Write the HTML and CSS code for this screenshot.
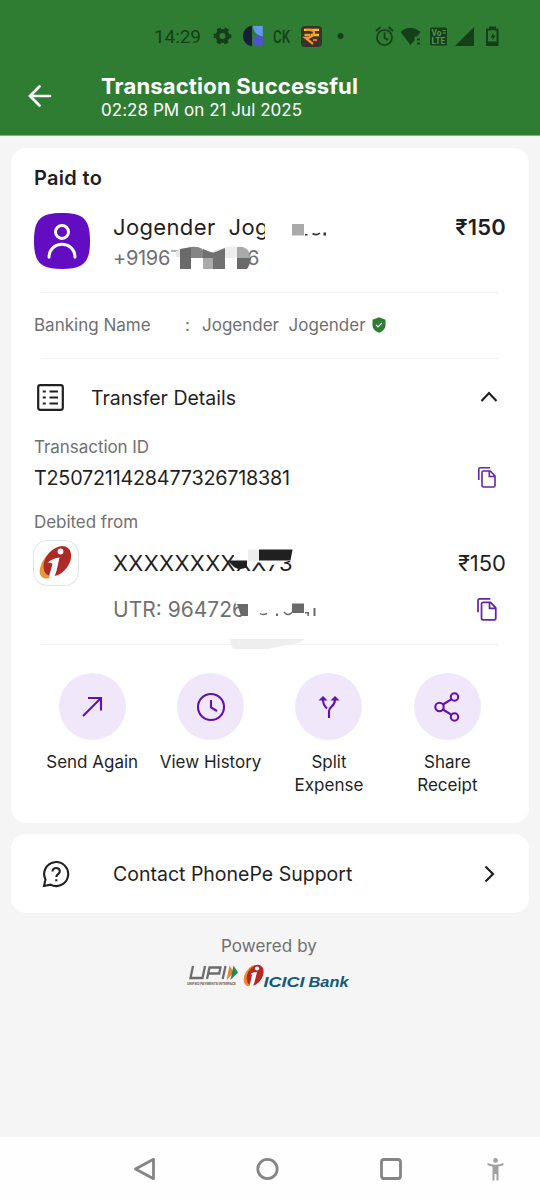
FILE: index.html
```html
<!DOCTYPE html>
<html lang="en">
<head>
<meta charset="utf-8">
<title>Transaction Successful</title>
<link rel="stylesheet" href="styles.css">
</head>
<body>
<div class="screen">
  <header class="header">
    <div class="status">
      <span class="clock">14:29</span>
      <svg class="status-icons" width="350" height="30" viewBox="210 21 350 30">
        <g fill="none" stroke="#153f19">
          <circle cx="222.500" cy="36" r="5" stroke-width="4"/>
          <circle cx="222.500" cy="36" r="7.500" stroke-width="2.600" stroke-dasharray="4.300 3.554" stroke-dashoffset="2.150"/>
        </g>
        <path d="M252 25.500A10.600 10.600 0 0 0 252 46.500z" fill="#17203a"/>
        <path d="M253 26h9.800v10.500C257 36 253 31 253 26z" fill="#6597ef"/>
        <circle cx="258" cy="41" r="5.200" fill="#4e54cf"/><path d="M258 36.500h4.800V46H258z" fill="#4e54cf"/>
        <text class="ck" x="273" y="42.800" textLength="17" lengthAdjust="spacingAndGlyphs">CK</text>
        <rect x="301" y="26" width="21" height="21" rx="4" fill="#38332b"/>
        <path d="M304 29.800h15M311 35h8" stroke="#ffc22a" stroke-width="2.300"/>
        <path d="M304.500 35h6M306 29.800h3q5 0 5 3t-5 5h-3.500l7.500 6" fill="none" stroke="#f7962c" stroke-width="2.300"/>
        <path d="M313 40h4" stroke="#f16c2c" stroke-width="2.200"/>
        <circle cx="340.500" cy="36" r="3" fill="#153f19"/>
        <g fill="none" stroke="#153f19" stroke-width="1.700">
          <circle cx="384.500" cy="37.500" r="7.500"/><path d="M384.500 32.500v5.500l3.500 2M376 31l4.500-4M393 31l-4.500-4"/>
        </g>
        <path d="M400.500 32Q410.500 23.500 420.500 32L417 36.500h-2.500v4L410.500 45z" fill="#153f19"/>
        <path d="M417 38.500h3v2h-3zM417 42.500h3v2h-3z" fill="#153f19"/>
        <rect x="430" y="27.500" width="17" height="18" rx="1.500" fill="#153f19"/>
        <text class="volte" x="431.500" y="35.500" textLength="10" lengthAdjust="spacingAndGlyphs">Vo</text><path d="M442.500 30.500h3.500M442.500 33h3.500" stroke="#4c9750"/>
        <text class="volte" x="431.500" y="44.300" textLength="14" lengthAdjust="spacingAndGlyphs">LTE</text>
        <path d="M455 46L474 27V46z" fill="#153f19"/>
        <path d="M490 27.500h5v2h2.500v15.500h-10.500v-15.500h3z" fill="none" stroke="#153f19" stroke-width="2"/>
        <path d="M487 41.500h11v4h-11zM490 27.500h5v2.500h-5zM493.500 32.500l-3 5h2v3l3-5h-2z" fill="#153f19"/>
      </svg>
    </div>
    <div class="titlebar">
      <svg class="back" width="24" height="24" viewBox="0 0 24 24"><path d="M22 12H2.500M11.500 2.500L2 12l9.500 9.500"/></svg>
      <div>
        <h1 class="title">Transaction Successful</h1>
        <p class="when">02:28 PM on 21 Jul 2025</p>
      </div>
    </div>
  </header>

  <main class="content">
    <section class="card receipt">
      <h2 class="paid">Paid to</h2>
      <div class="payee">
        <svg class="avatar" width="56" height="56" viewBox="0 0 57 57"><path d="M28.500 0C50 0 57 6 57 28.500S50 57 28.500 57 0 51 0 28.500 7 0 28.500 0z"/><circle cx="28.500" cy="19.300" r="6.600"/><path class="line" d="M15.300 45c0-17.500 26.400-17.500 26.400 0"/></svg>
        <div class="who">
          <p class="name">Jogender&nbsp; Jog</p>
          <p class="phone">+9196<span class="phone-end">6</span></p>
          <svg class="mask mask-payee" width="230" height="64" viewBox="105 210 230 64">
            <path d="M265 214h16v27h-16z" fill="#fff"/>
            <path d="M292 224h12v11.500h-12z" fill="#aaa"/>
            <path d="M305 234h2.500v1.500H305zM323.500 232.500h2.500v3h-2.500z" fill="#333"/><path d="M312.500 233.500q4 2.500 7.500-.5" fill="none" stroke="#333" stroke-width="1.500"/>
            <path d="M171 251h6.500l-1 2" fill="none" stroke="#999" stroke-width="1.500"/>
            <path d="M176 251l15-3.500v9.500h-15zM214 250l21-4v12h-21z" fill="#e9e9e9"/>
            <path d="M180 249l11-2v11h12v-5.500h22V269h-12v-11h-10v11h-11v-11h-1v11H180z" fill="#6a6a6a"/>
            <path d="M191 247q8-1 12 3v8h-12z" fill="#858585"/><path d="M191.500 258H203v11h-11.500z" fill="#fff"/>
            <path d="M203 249l10 4 12-5v21h-12v-11h-10z" fill="#707070"/>
            <path d="M203 258h10v11h-10z" fill="#aaa"/><path d="M225 247h12v11h-12z" fill="#eee"/><path d="M225 258h12v11h-12z" fill="#fff"/>
            <path d="M237 247q9-1 12 5l1 6h-13z" fill="#aaa"/><path d="M237 258h14q-1 7-4 11h-10z" fill="#6a6a6a"/>
          </svg>
        </div>
        <p class="amount strong">₹150</p>
      </div>
      <hr class="rule">
      <div class="bank">
        <span class="bank-label">Banking Name</span><span class="colon">:</span><span>Jogender&nbsp; Jogender</span>
        <svg class="shield" width="14" height="16" viewBox="0 0 14 16"><path d="M7 .3L13.500 2.800V8c0 3.800-3 6.600-6.500 7.700C3.500 14.600.5 11.800.5 8V2.800z" fill="#2b7d32"/><path d="M4 7.800l2 2 4-4" fill="none" stroke="#fff" stroke-width="1.200"/></svg>
      </div>
      <hr class="rule">
      <div class="details">
        <svg class="list" width="27" height="27" viewBox="0 0 27 27"><rect x="1.200" y="1.200" width="24.600" height="24.600" rx="2"/><path d="M5.800 7.500h3M12.500 7.500h8.500M5.800 13.500h3M12.500 13.500h8.500M5.800 19.500h3M12.500 19.500h8.500"/></svg>
        <span class="details-title">Transfer Details</span>
        <svg class="chev" width="18" height="18" viewBox="0 0 18 18"><path d="M1.500 13L9 5l7.500 8"/></svg>
      </div>
      <p class="label">Transaction ID</p>
      <div class="txn">
        <span class="txn-id">T2507211428477326718381</span>
        <svg class="copy" width="18" height="21" viewBox="0 0 18 21"><path d="M.8 13V2.300Q.8.800 2.300.800H12M5.300 4h7L17 9v9.500q0 1.500-1.500 1.500h-10Q4 20 4 18.500v-13Q4 4 5.300 4zM11.300 4v5.500H17"/></svg>
      </div>
      <p class="label debited">Debited from</p>
      <div class="account">
        <svg class="bank-logo" width="46" height="46" viewBox="0 0 46 46">
          <rect class="frame" x=".6" y=".6" width="44.800" height="44.800" rx="13"/>
          <g transform="rotate(38 23 22)"><ellipse cx="21.500" cy="24.500" rx="10" ry="18" fill="#eb9736"/><ellipse cx="23.500" cy="20.500" rx="11.500" ry="17" fill="#ae2a27"/></g>
          <circle cx="27.500" cy="11.500" r="2.900" fill="#fff"/><path d="M14.500 22.500q6-4.500 12-5l-3 13.500q-1 5-4.500 8-3.500.5-2.500-4.500l3-10.500q-1-2-5-1.500z" fill="#fff"/>
        </svg>
        <div class="acct-wrap">
          <span class="acct">XXXXXXXXXX73</span>
          <svg class="mask mask-acct" width="80" height="32" viewBox="225 545 80 32">
            <path d="M234 545h48v18.500l-14 2-5-3h-29zM282 545h14v16h-14z" fill="#fff"/>
            <path d="M248 549.500h11V561h-11z" fill="#eee"/><path d="M259 549.500h33.500l-2 11H259z" fill="#202020"/>
            <path d="M227.500 560.500H247v7q-8 3-13-.5z" fill="#202020"/>
          </svg>
        </div>
        <p class="amount">₹150</p>
      </div>
      <div class="utr">
        <div class="acct-wrap">
          <span class="utr-text">UTR: 964726</span>
          <svg class="mask mask-utr" width="100" height="32" viewBox="230 595 100 32">
            <path d="M235.500 597h14v8h-14zM248 597h8v24h-8z" fill="#fff"/><path d="M237 605h11v12h-7z" fill="#6a6a6a"/>
            <path d="M292 604.500h12V614h-12z" fill="#6a6a6a"/>
            <path d="M260 614.500q3 2 7 0M284 613q4 5 8.500 0" fill="none" stroke="#6a6a6a" stroke-width="1.500"/>
            <path d="M276 614.500h2v2.500h-2zM305 613h4v4h-1.500v-2.500H305zM313.500 609h2v8h-2z" fill="#6a6a6a"/>
          </svg>
        </div>
        <svg class="copy" width="20" height="23" viewBox="0 0 18 21"><path d="M.8 13V2.300Q.8.800 2.300.800H12M5.300 4h7L17 9v9.500q0 1.500-1.500 1.500h-10Q4 20 4 18.500v-13Q4 4 5.300 4zM11.300 4v5.500H17"/></svg>
      </div>
      <div class="rule-wrap">
        <hr class="rule">
        <svg class="mask mask-rule" width="76" height="12" viewBox="0 0 76 12"><path d="M0 0h75q-5 5-18 6l-20 4H4q-4-3-4-10z" fill="#eee"/></svg>
      </div>
      <nav class="actions">
        <div class="action"><span class="disc"><svg width="34" height="34" viewBox="0 0 34 34"><path d="M8 26L26 8M13 8h13v12.500"/></svg></span>Send Again</div>
        <div class="action"><span class="disc"><svg width="34" height="34" viewBox="0 0 34 34"><circle cx="17" cy="17" r="13"/><path d="M17 10v7.500l6 3.500"/></svg></span>View History</div>
        <div class="action"><span class="disc"><svg width="34" height="34" viewBox="0 0 34 34"><path d="M11 9.500C11 14 12 16 15 18.500M23 9.500C23 17 17 16 17 21v7"/><path class="solid" d="M9 9.500L11 7.500l2 2zM21 9.500l2-2 2 2z"/></svg></span>Split Expense</div>
        <div class="action"><span class="disc"><svg width="34" height="34" viewBox="0 0 34 34"><circle cx="9.500" cy="17" r="4.200"/><circle cx="24.500" cy="7" r="3.700"/><circle cx="24.500" cy="27" r="3.700"/><path d="M13 14.500l8.200-5.200M13 19.500l8.200 5.200"/></svg></span>Share Receipt</div>
      </nav>
    </section>

    <section class="card support">
      <svg class="help" width="28" height="28" viewBox="0 0 28 28"><path d="M2 26l1.500-6.500A12 12 0 1 1 8.500 24.600z"/><path d="M10.500 11.500c0-5 7.500-4.500 7.300 0 0 2.500-3.500 2.800-3.500 5.500M14.300 19.300v2"/></svg>
      <span class="support-text">Contact PhonePe Support</span>
      <svg class="chev" width="18" height="18" viewBox="0 0 18 18"><path d="M5.500 1.500L13 9l-7.500 7.500"/></svg>
    </section>

    <footer class="powered">
      <p class="powered-text">Powered by</p>
      <svg class="logos" width="164" height="30" viewBox="186 962 164 30">
        <g fill="none" stroke="#6d6d6d" stroke-width="2.300">
          <path d="M193 966l-2.500 12h12L205 966M207 979l2.500-11.500h11l-1.300 6h-11M225.500 966l-2.800 13"/>
        </g>
        <path d="M229.500 965.500l4.500 7-7.500 7.500z" fill="#f08131"/><path d="M233.500 965.500l4.500 7-7.500 7.500z" fill="#218b4b"/>
        <text class="upi-sub" x="187" y="984.500" textLength="49" lengthAdjust="spacingAndGlyphs">UNIFIED PAYMENTS INTERFACE</text>
        <g transform="rotate(30 254 975)"><ellipse cx="252.500" cy="976.500" rx="7" ry="11.500" fill="#f18a2c"/><ellipse cx="255" cy="974.500" rx="7.500" ry="11" fill="#b72824"/></g>
        <circle cx="257" cy="968.500" r="2.100" fill="#fff"/><path d="M250.500 974q3-2 6.500-2l-2.500 10q-1 4-4 4.500-1 0-.5-2.500l2-9q0-1-1.500-1z" fill="#fff"/>
        <text class="icici" x="263.500" y="986.500" textLength="41" lengthAdjust="spacingAndGlyphs">ICICI</text>
        <text class="icici" x="308.500" y="986.500" textLength="40" lengthAdjust="spacingAndGlyphs">Bank</text>
      </svg>
    </footer>
  </main>

  <div class="navbar">
    <svg width="540" height="63" viewBox="0 1137 540 63">
      <g fill="none" stroke="#858585" stroke-width="2.800" stroke-linejoin="round">
        <path d="M135.500 1169L153.500 1159.300V1178.700z"/><circle cx="267.500" cy="1169" r="9.700"/><rect x="381.500" y="1159.500" width="19" height="19" rx="2.500"/>
      </g>
      <circle cx="495.500" cy="1160.500" r="2.400" fill="#a2a2a2"/>
      <path d="M487.500 1163q8 3.300 16 0v2.200l-5 1.300v14h-2v-6.500h-2v6.500h-2v-14l-5-1.300z" fill="#a2a2a2"/>
    </svg>
  </div>
</div>
</body>
</html>
```

FILE: styles.css
```css
* { box-sizing: border-box; margin: 0; padding: 0; }
body { font-family: Inter, "Noto Sans", sans-serif; color: #1f1f1f; background: #f5f5f5; }
svg { display: block; flex: none; }
.screen { width: 540px; height: 1200px; display: flex; flex-direction: column; overflow: hidden; }

.header { height: 136px; background: #2f7d33; border-bottom: 1px solid #83b186; flex: none; }
.status { height: 72px; padding-left: 154px; display: flex; align-items: center; }
.clock { width: 56px; flex: none; font: 19px Roboto, sans-serif; letter-spacing: -0.1px; color: #153f19; }
.ck { font: 500 18.500px Roboto, sans-serif; fill: #153f19; }
.volte { font: bold 9.500px Roboto, sans-serif; fill: #4c9750; }
.titlebar { display: flex; align-items: center; padding-left: 28px; gap: 49px; height: 50px; color: #fff; }
.back { fill: none; stroke: #fff; stroke-width: 2.700; stroke-linecap: round; margin-top: -2px; }
.title { font-size: 22px; line-height: 26px; font-weight: 700; letter-spacing: 0.18px; white-space: nowrap; }
.when { font-size: 17px; line-height: 22px; letter-spacing: 0.04px; white-space: nowrap; }

.content { flex: 1; padding: 12px 11px 0; }
.card { background: #fff; border-radius: 15px; }
.receipt { height: 675px; padding: 0 23px; }
.paid { font-size: 20px; line-height: 60px; font-weight: 600; letter-spacing: 0.3px; }
.payee { height: 84px; display: flex; padding-top: 5px; }
.avatar { fill: #630dc2; }
.avatar circle, .avatar .line { fill: none; stroke: #fff; stroke-width: 3; stroke-linecap: round; }
.who { position: relative; margin-left: 23px; flex: 1; white-space: nowrap; }
.name { font-size: 22px; line-height: 28px; letter-spacing: 0.36px; }
.phone { font-size: 20px; line-height: 34px; letter-spacing: -0.3px; color: #707070; }
.phone-end { margin-left: 77px; }
.amount { margin-left: auto; font-size: 22px; line-height: 28px; }
.strong { font-weight: 600; letter-spacing: 0.2px; }
.mask { position: absolute; }
.mask-payee { left: -8px; top: -3px; }
.rule { border: 0; height: 1px; background: #f1f1f1; margin: 0 7px; }
.bank { height: 65px; padding-bottom: 2px; display: flex; align-items: center; font-size: 17px; color: #707070; }
.bank-label { width: 151px; }
.colon { width: 17px; }
.shield { margin-left: 6px; }
.details { height: 76px; display: flex; align-items: center; padding: 0 8px 0 3px; }
.list { fill: none; stroke: #202020; stroke-width: 2.200; }
.details-title { margin-left: 27px; font-size: 19.500px; padding-top: 1px; }
.chev { margin-left: auto; fill: none; stroke: #202020; stroke-width: 2.200; }
.label { font-size: 17px; line-height: 24px; letter-spacing: -0.05px; color: #707070; }
.txn { height: 37px; display: flex; align-items: center; padding-right: 10px; font-size: 19.800px; letter-spacing: -0.23px; }
.copy { margin-left: auto; fill: none; stroke: #6525a5; stroke-width: 1.600; }
.debited { margin-top: 14px; }
.account { height: 46px; margin-top: 6px; display: flex; align-items: center; }
.bank-logo { margin-left: -1px; }
.frame { fill: #fff; stroke: #dce3ea; }
.acct-wrap { position: relative; margin-left: 34px; font-size: 22px; line-height: 28px; white-space: nowrap; }
.acct { letter-spacing: 0.36px; }
.mask-acct { left: 112px; top: -4px; }
.utr { height: 47px; padding-right: 9px; display: flex; align-items: center; color: #707070; }
.utr .acct-wrap { margin-left: 79px; }
.utr-text { font-size: 21px; }
.mask-utr { left: 117px; top: -1px; }
.rule-wrap { position: relative; padding-top: 11px; }
.mask-rule { left: 196px; top: 6px; }
.actions { display: grid; grid-template-columns: repeat(4, 118.400px); margin: 28px 0 0 -1px; }
.action { display: flex; flex-direction: column; align-items: center; text-align: center; font-size: 17px; line-height: 23px; padding: 0 16px; white-space: nowrap; }
.action:nth-child(n+3) { white-space: normal; }
.disc { width: 67px; height: 67px; margin-bottom: 11px; border-radius: 50%; background: #f1e7fb; display: flex; align-items: center; justify-content: center; }
.disc svg { fill: none; stroke: #5f12ae; stroke-width: 2.100; }
.disc .solid { fill: #5f12ae; }
.support { height: 79px; margin-top: 11px; padding: 0 31px; display: flex; align-items: center; }
.help { fill: none; stroke: #202020; stroke-width: 2.100; }
.support-text { margin-left: 43px; font-size: 19.500px; }
.powered { display: flex; flex-direction: column; align-items: center; padding: 22px 2px 0 0; }
.powered-text { font-size: 17px; line-height: 22px; letter-spacing: 0.1px; color: #707070; margin-bottom: 5px; }
.logos { margin-left: -2px; overflow: visible; }
.upi-sub { font: bold 4px Inter, sans-serif; fill: #606060; }
.icici { font: italic bold 15.500px "Liberation Sans", sans-serif; fill: #12597b; }
.navbar { height: 63px; background: #fefefe; flex: none; }
```
